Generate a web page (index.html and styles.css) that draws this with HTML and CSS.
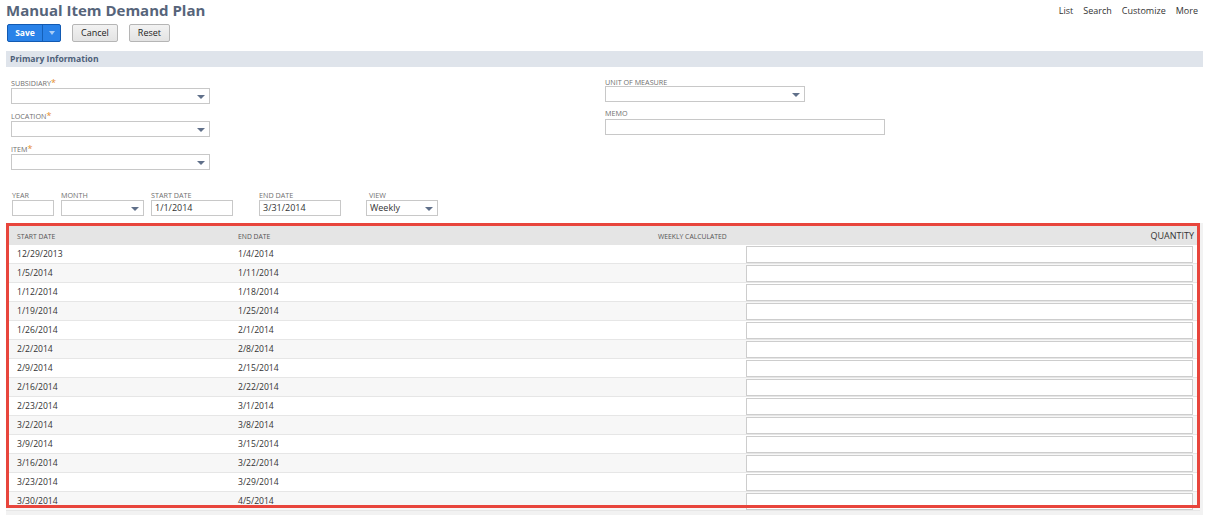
FILE: index.html
```html
<!DOCTYPE html>
<html>
<head>
<meta charset="utf-8">
<link rel="stylesheet" href="styles.css">
</head>
<body>
<div class="top">
  <h1 class="title">Manual Item Demand Plan</h1>
  <nav class="links"><span>List</span><span>Search</span><span>Customize</span><span>More</span></nav>
</div>
<div class="buttons">
  <div class="btn-save"><span class="save-label">Save</span><span class="save-arrow"><i></i></span></div>
  <div class="btn">Cancel</div>
  <div class="btn">Reset</div>
</div>
<div class="section-bar">Primary Information</div>
<div class="form">
  <div class="col-left">
    <div class="field">
      <div class="label">SUBSIDIARY<span class="req">*</span></div>
      <div class="select w198"><i class="arr"></i></div>
    </div>
    <div class="field">
      <div class="label">LOCATION<span class="req">*</span></div>
      <div class="select w198"><i class="arr"></i></div>
    </div>
    <div class="field">
      <div class="label">ITEM<span class="req">*</span></div>
      <div class="select w198"><i class="arr"></i></div>
    </div>
  </div>
  <div class="col-right">
    <div class="field-r">
      <div class="label">UNIT OF MEASURE</div>
      <div class="select w199"><i class="arr"></i></div>
    </div>
    <div class="field-r memo">
      <div class="label">MEMO</div>
      <div class="input w279"></div>
    </div>
  </div>
</div>
<div class="dates">
  <div class="dfield year"><div class="label">YEAR</div><div class="input w41"></div></div>
  <div class="dfield month"><div class="label">MONTH</div><div class="select w82"><i class="arr"></i></div></div>
  <div class="dfield start"><div class="label">START DATE</div><div class="input w81">1/1/2014</div></div>
  <div class="dfield end"><div class="label">END DATE</div><div class="input w81">3/31/2014</div></div>
  <div class="dfield view"><div class="label">VIEW</div><div class="select w71">Weekly<i class="arr"></i></div></div>
</div>
<div class="grid-wrap">
  <div class="grid">
    <div class="row head">
      <div class="c1">START DATE</div>
      <div class="c2">END DATE</div>
      <div class="c3">WEEKLY CALCULATED</div>
      <div class="c4 qty">QUANTITY</div>
    </div>
    <div class="row"><div class="c1">12/29/2013</div><div class="c2">1/4/2014</div><div class="c3"></div><div class="c4"><div class="qin"></div></div></div>
    <div class="row"><div class="c1">1/5/2014</div><div class="c2">1/11/2014</div><div class="c3"></div><div class="c4"><div class="qin"></div></div></div>
    <div class="row"><div class="c1">1/12/2014</div><div class="c2">1/18/2014</div><div class="c3"></div><div class="c4"><div class="qin"></div></div></div>
    <div class="row"><div class="c1">1/19/2014</div><div class="c2">1/25/2014</div><div class="c3"></div><div class="c4"><div class="qin"></div></div></div>
    <div class="row"><div class="c1">1/26/2014</div><div class="c2">2/1/2014</div><div class="c3"></div><div class="c4"><div class="qin"></div></div></div>
    <div class="row"><div class="c1">2/2/2014</div><div class="c2">2/8/2014</div><div class="c3"></div><div class="c4"><div class="qin"></div></div></div>
    <div class="row"><div class="c1">2/9/2014</div><div class="c2">2/15/2014</div><div class="c3"></div><div class="c4"><div class="qin"></div></div></div>
    <div class="row"><div class="c1">2/16/2014</div><div class="c2">2/22/2014</div><div class="c3"></div><div class="c4"><div class="qin"></div></div></div>
    <div class="row"><div class="c1">2/23/2014</div><div class="c2">3/1/2014</div><div class="c3"></div><div class="c4"><div class="qin"></div></div></div>
    <div class="row"><div class="c1">3/2/2014</div><div class="c2">3/8/2014</div><div class="c3"></div><div class="c4"><div class="qin"></div></div></div>
    <div class="row"><div class="c1">3/9/2014</div><div class="c2">3/15/2014</div><div class="c3"></div><div class="c4"><div class="qin"></div></div></div>
    <div class="row"><div class="c1">3/16/2014</div><div class="c2">3/22/2014</div><div class="c3"></div><div class="c4"><div class="qin"></div></div></div>
    <div class="row"><div class="c1">3/23/2014</div><div class="c2">3/29/2014</div><div class="c3"></div><div class="c4"><div class="qin"></div></div></div>
    <div class="row"><div class="c1">3/30/2014</div><div class="c2">4/5/2014</div><div class="c3"></div><div class="c4"><div class="qin"></div></div></div>
  </div>
  <div class="highlight"></div>
</div>
</body>
</html>
```
FILE: styles.css
```css
* { box-sizing: border-box; }
html, body { margin: 0; padding: 0; background: #fff; }
body {
  font-family: "Open Sans", "Liberation Sans", sans-serif;
  color: #333;
  width: 1209px;
  height: 516px;
  overflow: hidden;
}
.top {
  display: flex;
  justify-content: space-between;
  align-items: flex-start;
  height: 22px;
  padding: 0 10px 0 6px;
}
.title {
  margin: 0;
  font-size: 15px;
  line-height: 20px;
  font-weight: 700;
  color: #56647a;
}
.links {
  display: flex;
  gap: 10px;
  font-size: 9px;
  line-height: 22px;
  color: #333;
  padding-right: 1px;
}
.buttons {
  display: flex;
  gap: 11px;
  padding-left: 7px;
  margin-top: 2px;
  height: 18px;
}
.btn-save {
  display: flex;
  height: 18px;
  border: 1px solid #125ab2;
  background: #2a82e8;
  border-radius: 2px;
  color: #fff;
  font-size: 8.5px;
  font-weight: 700;
}
.save-label {
  width: 35px;
  text-align: center;
  line-height: 16px;
  border-right: 1px solid #1560b8;
}
.save-arrow {
  width: 17px;
  display: flex;
  align-items: center;
  justify-content: center;
}
.save-arrow i {
  width: 0; height: 0;
  border-left: 3px solid transparent;
  border-right: 3px solid transparent;
  border-top: 4px solid #a9cdf5;
}
.btn {
  height: 18px;
  padding: 0 8px;
  border: 1px solid #b5b5b5;
  border-radius: 2px;
  background: linear-gradient(#f2f2f2, #e3e3e3);
  font-size: 9px;
  line-height: 16px;
  color: #222;
}
.section-bar {
  margin: 9px 6px 0 6px;
  height: 16px;
  background: #dfe4eb;
  color: #4d5f79;
  font-size: 8.6px;
  font-weight: 700;
  line-height: 17px;
  padding-left: 4px;
}
.form {
  display: flex;
  padding-left: 11px;
  margin-top: 9px;
}
.col-left { width: 594px; }
.field { height: 33px; }
.field-r { height: 31px; }
.label {
  font-size: 7.2px;
  line-height: 11px;
  color: #707070;
  text-transform: uppercase;
  white-space: nowrap;
}
.field .label { height: 12px; line-height: 15px; }
.field-r .label { height: 10px; line-height: 12px; }
.field-r.memo .label { height: 11px; margin-top: 1px; line-height: 11px; }
.req { color: #e58b2c; font-size: 9px; line-height: 9px; }
.select, .input {
  position: relative;
  height: 16px;
  border: 1px solid #c8c8c8;
  background: #fff;
  font-size: 9px;
  line-height: 14px;
  padding-left: 3px;
  color: #333;
}
.arr {
  position: absolute;
  right: 4px;
  top: 6px;
  width: 0; height: 0;
  border-left: 4px solid transparent;
  border-right: 4px solid transparent;
  border-top: 4px solid #60708a;
}
.w198 { width: 199px; }
.w199 { width: 200px; }
.w279 { width: 280px; }
.w41 { width: 42px; }
.w82 { width: 83px; }
.w81 { width: 82px; }
.w71 { width: 72px; }
.dates {
  display: flex;
  margin-top: 14px;
  padding-left: 12px;
}
.dfield .label { height: 11px; line-height: 12px; }
.year { width: 49px; }
.month { width: 90px; }
.start { width: 108px; }
.end { width: 107px; }
.view { width: 80px; }
.view .label { padding-left: 3px; }
.grid-wrap {
  position: relative;
  margin: 7px 6px 0 6px;
  padding: 0 3px 4px 0;
  background: #f2f2f2;
}
.grid { background: #fff; }
.row {
  display: flex;
  height: 19px;
  border-bottom: 1px solid #e6e6e6;
  font-size: 8.6px;
  line-height: 18px;
  color: #333;
}
.row:nth-child(odd) { background: #f7f7f7; }
.row.head {
  height: 22px;
  background: #e5e5e5;
  border-bottom: none;
  font-size: 6.8px;
  line-height: 27px;
  color: #555;
}
.c1 { width: 221px; padding-left: 11px; }
.c2 { width: 420px; padding-left: 11px; }
.c3 { width: 99px; padding-left: 11px; white-space: nowrap; }
.c4 { flex: 1; padding-right: 7px; }
.head .qty {
  text-align: right;
  font-size: 9px;
  line-height: 25px;
  color: #333;
  padding-right: 6px;
}
.qin {
  margin-top: 1px;
  height: 17px;
  border: 1px solid #cdcdcd;
  background: #fff;
}
.highlight {
  position: absolute;
  left: 0;
  top: 0;
  width: 1194px;
  height: 285px;
  border: 3px solid #e8453c;
  pointer-events: none;
}
```
